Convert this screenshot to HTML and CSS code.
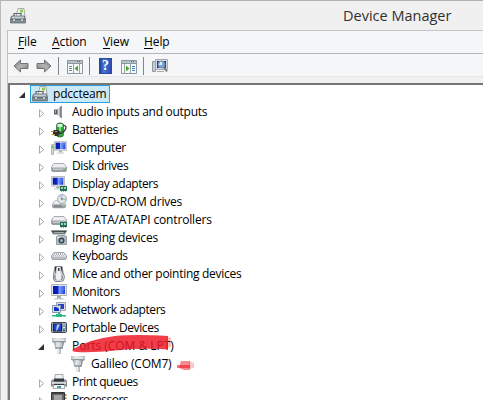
FILE: index.html
```html
<!DOCTYPE html>
<html lang="en">
<head>
<meta charset="utf-8">
<title>Device Manager</title>
<link rel="stylesheet" href="styles.css">
</head>
<body>
<svg class="defs" aria-hidden="true">
  <defs>
    <filter id="soft" x="-20%" y="-30%" width="140%" height="160%"><feGaussianBlur stdDeviation=".7"/></filter>
    <linearGradient id="silver" x2="0" y2="1"><stop stop-color="#f5f6f7"/><stop offset=".5" stop-color="#d4d8da"/><stop offset="1" stop-color="#8d9397"/></linearGradient>
    <linearGradient id="cone" x2="1"><stop stop-color="#666e76"/><stop offset=".4" stop-color="#e1e6ea"/><stop offset="1" stop-color="#626a71"/></linearGradient>
    <linearGradient id="screenfill" x2="1"><stop stop-color="#0519ad"/><stop offset=".42" stop-color="#0a25c5"/><stop offset=".5" stop-color="#87a6ff"/><stop offset="1" stop-color="#1737d5"/></linearGradient>
    <linearGradient id="arrowfill" x2="1" y2="1"><stop stop-color="#777"/><stop offset=".5" stop-color="#b5b5b5"/><stop offset="1" stop-color="#777"/></linearGradient>
    <linearGradient id="dark" x2="0" y2="1"><stop stop-color="#2d3436"/><stop offset="1" stop-color="#8c9598"/></linearGradient>
    <symbol id="toolbox" viewBox="0 0 16 16"><path d="M8 .5h6l1 8H6z" fill="#eef0ed" stroke="#8d9291" stroke-width=".7"/><path d="M10 1.5h3v3h-3z" fill="#8dcc54"/><path d="M4 8V5.5h7V8" fill="none" stroke="#60676c" stroke-width="1.2"/><path d="M1.5 8h13l1 3v4H.5v-4z" fill="#84929b" stroke="#596369" stroke-width=".7"/><path d="M2 8.5h12v2H2z" fill="#c2ccd1"/><path d="M1 11.5h14" stroke="#566168"/><path d="M3 10.5h2v3H3zm8 0h2v3h-2z" fill="#e8eef0" stroke="#596369" stroke-width=".5"/></symbol>
    <symbol id="speaker" viewBox="0 0 16 16"><path d="M3 5.5h3v5H3z" fill="#596166"/><path d="M6 5.5L10 2v12l-4-3.5z" fill="url(#cone)"/><path d="M10 1.5l1 .5v12l-1 .5z" fill="#8d959a"/><path d="M4 6h1v3H4z" fill="#a9afb3"/></symbol>
    <symbol id="battery" viewBox="0 0 16 16"><rect x="5.5" y="1" width="7" height="14" rx="2.5" fill="#28a738" stroke="#395d3b" stroke-width=".7"/><path d="M6.5 2h5v3h-5z" fill="#d9f4d9"/><path d="M8 5h2v8H8z" fill="#7be37c"/><path d="M12 3c5 1 3 5 0 7s-4 3-6 2" fill="none" stroke="#333" stroke-width="1.2"/><path d="M3 8h4l3 2-3 4H4l-2-2V9z" fill="#30312d"/><path d="M0 9.5h3M1 12.5h3" stroke="#b58927" stroke-width="1.2"/><path d="M4 9h2v1H4z" fill="#929286"/></symbol>
    <symbol id="screen" viewBox="0 0 16 16"><path d="M.5.5h15v11H.5z" fill="#e3e5e6" stroke="#b1b5b7"/><path d="M2 2h12v8H2z" fill="url(#screenfill)"/><path d="M8 2h6v4L8 8z" fill="#718fff" opacity=".35"/><path d="M6 12h4v2H6z" fill="#a7adb0"/><path d="M4 14h8l1 1.5H3z" fill="#c5c9cb"/></symbol>
    <symbol id="computer" viewBox="0 0 16 16"><path d="M.5 4.5h2v10h-2z" fill="#d9dddf" stroke="#a1a6a9" stroke-width=".8"/><path d="M1 6h1v2H1z" fill="#42bd4d"/><use href="#screen" x="3" y="1" width="13" height="13"/></symbol>
    <symbol id="disk" viewBox="0 0 16 16"><path d="M3 5.5h10l2.5 3.5v3q0 1.5-1.5 1.5H2Q.5 13.500.5 12V9z" fill="url(#silver)" stroke="#858b90" stroke-width=".7"/><path d="M3 6h10l2 3.500H1z" fill="#eceeef"/><path d="M1.500 10h13v2.500h-13z" fill="#c3c7c9" stroke="#888e91" stroke-width=".6"/><path d="M12 11h2v1h-2z" fill="#49c34d"/></symbol>
    <symbol id="card" viewBox="0 0 7 6"><path d="M0 0h7v5H0z" fill="#187552"/><path d="M1 1h2v2H1zm3 0h2v2H4z" fill="#b9c9ad"/><path d="M1 5h1v1H1zm2 0h1v1H3zm2 0h1v1H5z" fill="#caa73b"/></symbol>
    <symbol id="display" viewBox="0 0 16 16"><use href="#screen" width="14" height="14"/><use href="#card" x="9" y="10" width="7" height="6"/></symbol>
    <symbol id="dvd" viewBox="0 0 16 16"><use href="#disk" y="2" width="16" height="14"/><circle cx="11" cy="5" r="4.5" fill="#e5e8e8" stroke="#82898d" stroke-width=".7"/><path d="M8 2l3 3 1-4z" fill="#bbc7e7"/><path d="M11 5l4-1v3z" fill="#a3cfaa"/><circle cx="11" cy="5" r="1.300" fill="#929a9d"/><path d="M3 12h8" stroke="#555c60"/></symbol>
    <symbol id="ide" viewBox="0 0 16 16"><use href="#disk" y="-1" width="16" height="16"/><use href="#card" x="9" y="10" width="7" height="6"/></symbol>
    <symbol id="camera" viewBox="0 0 16 16"><path d="M0 .500h16l-2 4H2z" fill="url(#dark)"/><path d="M2 2h12l-2 1H4z" fill="#a1a9ab"/><path d="M5.500 6.500l2-1h6l2 1v8h-10z" fill="#b5bec5" stroke="#7a858d" stroke-width=".7"/><circle cx="10.500" cy="10.500" r="3" fill="#39454c"/><circle cx="10.500" cy="10.500" r="1.500" fill="#91b8cd"/><path d="M6 7h3v1H6z" fill="#e5e7e8"/></symbol>
    <symbol id="keyboard" viewBox="0 0 16 16"><path d="M3 4.500h10L15.500 8v2l-1 1.500h-13L.5 10V8z" fill="#b8bcc4" stroke="#8a8f98" stroke-width=".7"/><path d="M3 5h10l2 3.500H1z" fill="#f1f2f3"/><path d="M3 5.500h10M2 7.500h12" stroke="#b3b8c0" stroke-dasharray="1 1"/><path d="M3 6.500h11" stroke="#a3a8b0" stroke-dasharray="1 1"/></symbol>
    <symbol id="mouse" viewBox="0 0 16 16"><path d="M4 .500h7l1 6 1.500 4-1 4-2 1h-6l-2-2V9z" fill="#d3d6d8" stroke="#656c71" stroke-width=".8"/><path d="M4 1h1.500L4 9zM11 1H9.500l2 8z" fill="#2f363c"/><path d="M6 1h3v6H6z" fill="#eef0f1"/><path d="M7 2h1.500v3H7z" fill="#373d42"/><path d="M5 8q3-2 5 0v5q-2 2-5 0z" fill="#eff0f1"/><path d="M4 9q-1 4 1 5M11 9q1 4-1 5" fill="none" stroke="#737a80"/></symbol>
    <symbol id="network" viewBox="0 0 16 16"><path d="M5.500.500h9v8h-9z" fill="#d9dfe9" stroke="#9ba5b5"/><path d="M7 2h6v5H7z" fill="#243fc5"/><path d="M1.500 3.500h8v7h-8z" fill="#d8dfea" stroke="#8995aa"/><path d="M3 5h5v4H3z" fill="#1430c0"/><path d="M5 5h3v2z" fill="#8ba7ff"/><path d="M7 11h2v2H7z" fill="#26ae78"/><path d="M1 13h14v1.500H1z" fill="#22b67c"/><path d="M5 12h6v3H5z" fill="#26bd7e"/></symbol>
    <symbol id="portable" viewBox="0 0 16 16"><rect x=".5" y="2.500" width="15" height="10" rx="1" fill="#a2adba" stroke="#3d4853"/><path d="M2 3.500h9v8H2z" fill="#142234"/><path d="M3 4.500h7v6H3z" fill="#2148ca"/><path d="M6 4.500h3l-3 6H5z" fill="#b4c9ff"/><circle cx="13" cy="7.500" r="1.500" fill="#eff2f5" stroke="#4b5b70" stroke-width=".7"/><path d="M12 10.500h2" stroke="#354252"/></symbol>
    <symbol id="port" viewBox="0 0 16 16"><path d="M1 .500h14v3l-1 1h-1l-1 5-1.500 1.500H10V16H6v-5h-.5L4 9.500l-1-5H2l-1-1z" fill="url(#cone)"/><path d="M1 1h14v2H1z" fill="#e2e6e9"/><path d="M1 3.500h14" stroke="#929aa1"/><path d="M2 1v3M14 1v3" stroke="#a4abb1"/><path d="M6 5v4M8 5v4M10 5v4" stroke="#f0f3f5" stroke-width=".7"/><path d="M4 10h8" stroke="#707a81"/><path d="M7 11h1v4H7z" fill="#eef1f3"/></symbol>
    <symbol id="printer" viewBox="0 0 16 16"><path d="M4 .500h8v6H4z" fill="#f1f3f3" stroke="#858b8d" stroke-width=".7"/><path d="M1 5.500h14l1 2v5H0v-5z" fill="#858b8e"/><path d="M3 4.500h10v3H3z" fill="#343b3e"/><path d="M1 8h14v2H1z" fill="#d7dcdd"/><path d="M3 10h10l1 4.500H2z" fill="#f6f7f7" stroke="#8c9294" stroke-width=".7"/><path d="M3 10h10v1H3z" fill="#343c3f"/><path d="M6 12h4v2H6z" fill="#53aaaa"/><path d="M8 12h2v1H8z" fill="#276dc2"/></symbol>
    <symbol id="chip" viewBox="0 0 16 16"><path d="M14.500 2v14" stroke="#b99831" stroke-width="2" stroke-dasharray="2 1"/><path d="M.5.500h13v15H.5z" fill="#666" stroke="#343434"/><path d="M3 3h8v9H3z" fill="#a5a5a5"/><path d="M1 1h12v1H1z" fill="#444"/></symbol>
    <symbol id="back" viewBox="0 0 16 14"><path d="M1 7l6.500-6v3.500H15v5H7.500V13z" fill="url(#arrowfill)" stroke="#737373"/></symbol>
    <symbol id="panel" viewBox="0 0 16 14"><path d="M.5.500h15v13H.5z" fill="#f7f9fa" stroke="#8c979f"/><path d="M1 1h14v2H1z" fill="#b5c0c7"/><path d="M10 1h1v1h-1zm2 0h1v1h-1z" fill="#536879"/><path d="M1 3.500h14" stroke="#8c979f"/></symbol>
    <symbol id="tree-panel" viewBox="0 0 16 14"><use href="#panel" width="16" height="14"/><path d="M2 6.500h3M2 8.500h3M2 10.500h3" stroke="#6686a0"/><path d="M6.500 4v9M12.500 4v9" stroke="#9ba5ac"/><path d="M11 5.500v6l-3.500-3z" fill="#45a72d"/></symbol>
    <symbol id="action-panel" viewBox="0 0 16 14"><use href="#panel" width="16" height="14"/><path d="M11 6.500h3M11 8.500h3M11 10.500h3" stroke="#4385bd"/><path d="M9.500 4v9M3.500 4v9" stroke="#9ba5ac"/><path d="M5 5.500v6l3.500-3z" fill="#45a72d"/></symbol>
    <symbol id="scan" viewBox="0 0 16 16"><path d="M.5 3.500h3v10h-3z" fill="#c4cacd" stroke="#92999e"/><path d="M3.500 1.500h12v10h-12z" fill="#d9dcdd" stroke="#a4aaac"/><path d="M5 3h9v7H5z" fill="#1c34bd"/><path d="M5 13h7v1H5z" fill="#a6adaf"/><circle cx="9.500" cy="6.500" r="3.400" fill="#8ecbed" fill-opacity=".75" stroke="#7e92a8"/><path d="M8 4h2v3H7z" fill="#d7f1ff"/><path d="M12 9.500l3 4" stroke="#777e83" stroke-width="2"/></symbol>
  </defs>
</svg>
<div class="window">
  <header class="titlebar"><svg class="icon"><use href="#toolbox"/></svg><h1>Device Manager</h1></header>
  <main class="client">
    <nav class="menu"><span class="m-file"><u>F</u>ile</span><span class="m-action"><u>A</u>ction</span><span class="m-view"><u>V</u>iew</span><span class="m-help"><u>H</u>elp</span></nav>
    <div class="toolbar">
      <svg class="tool arrow"><use href="#back"/></svg>
      <svg class="tool arrow forward"><use href="#back"/></svg>
      <i class="sep"></i>
      <svg class="tool panel"><use href="#tree-panel"/></svg>
      <i class="sep"></i>
      <b class="help">?</b>
      <svg class="tool panel"><use href="#action-panel"/></svg>
      <i class="sep"></i>
      <svg class="icon"><use href="#scan"/></svg>
    </div>
    <div class="tree">
      <div class="row root"><svg class="twist" viewBox="0 0 7 7"><path d="M6 0v6H0z" fill="#303030"/></svg><div class="selected"><svg class="icon"><use href="#toolbox"/></svg><span class="t-root">pdccteam</span></div></div>
      <div class="row"><svg class="twist" viewBox="0 0 6 9"><path d="M.5.8v7.4l4.2-3.7z"/></svg><svg class="icon"><use href="#speaker"/></svg><span class="t-audio">Audio inputs and outputs</span></div>
      <div class="row"><svg class="twist" viewBox="0 0 6 9"><path d="M.5.8v7.4l4.2-3.7z"/></svg><svg class="icon"><use href="#battery"/></svg><span class="t-batteries">Batteries</span></div>
      <div class="row"><svg class="twist" viewBox="0 0 6 9"><path d="M.5.8v7.4l4.2-3.7z"/></svg><svg class="icon"><use href="#computer"/></svg><span class="t-computer">Computer</span></div>
      <div class="row"><svg class="twist" viewBox="0 0 6 9"><path d="M.5.8v7.4l4.2-3.7z"/></svg><svg class="icon"><use href="#disk"/></svg><span class="t-disk">Disk drives</span></div>
      <div class="row"><svg class="twist" viewBox="0 0 6 9"><path d="M.5.8v7.4l4.2-3.7z"/></svg><svg class="icon"><use href="#display"/></svg><span class="t-display">Display adapters</span></div>
      <div class="row"><svg class="twist" viewBox="0 0 6 9"><path d="M.5.8v7.4l4.2-3.7z"/></svg><svg class="icon"><use href="#dvd"/></svg><span class="t-dvd">DVD/CD-ROM drives</span></div>
      <div class="row"><svg class="twist" viewBox="0 0 6 9"><path d="M.5.8v7.4l4.2-3.7z"/></svg><svg class="icon"><use href="#ide"/></svg><span class="t-ide">IDE ATA/ATAPI controllers</span></div>
      <div class="row"><svg class="twist" viewBox="0 0 6 9"><path d="M.5.8v7.4l4.2-3.7z"/></svg><svg class="icon"><use href="#camera"/></svg><span class="t-imaging">Imaging devices</span></div>
      <div class="row"><svg class="twist" viewBox="0 0 6 9"><path d="M.5.8v7.4l4.2-3.7z"/></svg><svg class="icon"><use href="#keyboard"/></svg><span class="t-keyboards">Keyboards</span></div>
      <div class="row"><svg class="twist" viewBox="0 0 6 9"><path d="M.5.8v7.4l4.2-3.7z"/></svg><svg class="icon"><use href="#mouse"/></svg><span class="t-mice">Mice and other pointing devices</span></div>
      <div class="row"><svg class="twist" viewBox="0 0 6 9"><path d="M.5.8v7.4l4.2-3.7z"/></svg><svg class="icon"><use href="#screen"/></svg><span class="t-monitors">Monitors</span></div>
      <div class="row"><svg class="twist" viewBox="0 0 6 9"><path d="M.5.8v7.4l4.2-3.7z"/></svg><svg class="icon"><use href="#network"/></svg><span class="t-network">Network adapters</span></div>
      <div class="row"><svg class="twist" viewBox="0 0 6 9"><path d="M.5.8v7.4l4.2-3.7z"/></svg><svg class="icon"><use href="#portable"/></svg><span class="t-portable">Portable Devices</span></div>
      <div class="row open"><svg class="twist" viewBox="0 0 7 7"><path d="M6 0v6H0z" fill="#303030"/></svg><svg class="icon"><use href="#port"/></svg><span class="t-ports">Ports (COM &amp; LPT)</span></div>
      <div class="row child"><svg class="icon"><use href="#port"/></svg><span class="t-galileo">Galileo (COM7)</span></div>
      <div class="row"><svg class="twist" viewBox="0 0 6 9"><path d="M.5.8v7.4l4.2-3.7z"/></svg><svg class="icon"><use href="#printer"/></svg><span class="t-print">Print queues</span></div>
      <div class="row"><svg class="twist" viewBox="0 0 6 9"><path d="M.5.8v7.4l4.2-3.7z"/></svg><svg class="icon"><use href="#chip"/></svg><span class="t-processors">Processors</span></div>
    </div>
  </main>
</div>
<svg class="marker" viewBox="0 0 130 42" aria-hidden="true">
  <g fill="#ed1c24" filter="url(#soft)">
    <path d="M3 15Q20 5 45 2Q65 0 98 2V14Q98 16 91 15Q70 14 50 16Q22 19 7 18Q1 18 3 15Z" fill-opacity=".84"/>
    <path d="M97 3l4 1v9l-4 1z" fill-opacity=".3"/>
    <path d="M111 27h9v9h-6l-5-2z" fill-opacity=".5"/>
    <path d="M107 31h13v3h-13z" fill-opacity=".6"/>
    <path d="M119 27l5 2v5l-5 1z" fill-opacity=".25"/>
  </g>
</svg>
</body>
</html>
```
FILE: styles.css
```css
* { box-sizing: border-box; }
body { margin: 0; width: 483px; height: 400px; overflow: hidden; background: #f0f0f0; font: 12px/18px "Open Sans", "Noto Sans", sans-serif; color: #000; }
svg { flex: none; display: block; }
.defs { position: absolute; width: 0; height: 0; }
.window { height: 400px; border-top: 1px solid #b2b2b2; border-left: 1px solid #bababa; padding-left: 6px; }
.titlebar { height: 29px; display: flex; align-items: center; padding-left: 3px; }
.icon { width: 16px; height: 16px; }
.titlebar h1 { margin: 0 0 0 317px; font-size: 14.5px; font-weight: 400; line-height: 24px; letter-spacing: 0; color: #303030; white-space: nowrap; }
.client { height: 370px; border-top: 1px solid #c5c5c5; border-left: 1px solid #c1c1c1; }
.menu { height: 23px; display: flex; padding: 2px 0 0 10px; background: #f5f6f7; border-bottom: 1px solid #b2b5b9; }
.menu u { text-underline-offset: 2px; text-decoration-thickness: 1px; }
.menu span { white-space: nowrap; letter-spacing: -.1px; }
.m-file { width: 34px; }
.m-action { width: 51px; }
.m-view { width: 41px; }
.toolbar { height: 23px; display: flex; align-items: center; background: #f5f6f8; border-bottom: 1px solid #e3e5e6; padding: 1px 0 0 5px; }
.arrow { width: 16px; height: 14px; margin-right: 7px; }
.forward { transform: scaleX(-1); margin-right: 6px; }
.sep { width: 1px; height: 18px; background: #858585; }
.panel { width: 16px; height: 14px; margin: 2px 6px 0 8px; }
.help { width: 13px; height: 16px; margin-left: 9px; margin-right: 1px; background: linear-gradient(90deg, #1845a2, #5272d5 35%, #284cb5); color: #fff; border: 1px solid #294d9d; font: 700 14px/14px "Liberation Serif", serif; text-align: center; }
.toolbar > .icon { margin-left: 8px; }
.tree { height: 317px; overflow: hidden; margin-top: 6px; background: #fff; border-top: 2px solid #777; border-left: 2px solid #777; }
.row { height: 18px; display: flex; align-items: center; padding-left: 29px; white-space: nowrap; letter-spacing: -.2px; }
.twist { width: 6px; height: 9px; margin: 2px 6px 0 0; fill: #fff; stroke: #a2a2a2; stroke-width: .9; }
.row > .icon + span { margin-left: 5px; }
.root { padding-left: 9px; }
.root .twist, .open .twist { width: 7px; height: 7px; stroke: none; }
.root .twist { margin-right: 4px; }
.open { padding-left: 28px; }
.selected { height: 18px; width: 80px; display: flex; align-items: center; padding: 0 1px; gap: 5px; background: #cbe8f6; border: 1px solid #26a0da; line-height: 16px; }
.child { padding-left: 60px; }
.t-audio, .t-mice { letter-spacing: -.28px; }
.t-computer, .t-monitors { letter-spacing: -.32px; }
.t-disk, .t-portable, .t-keyboards { letter-spacing: -.4px; }
.t-display, .t-network, .t-print { letter-spacing: -.45px; }
.t-batteries, .t-processors { letter-spacing: -.5px; }
.t-ide { letter-spacing: -.15px; }
.t-ports { letter-spacing: -.03px; }
.marker { position: absolute; left: 70px; top: 334px; width: 130px; height: 42px; }
```
